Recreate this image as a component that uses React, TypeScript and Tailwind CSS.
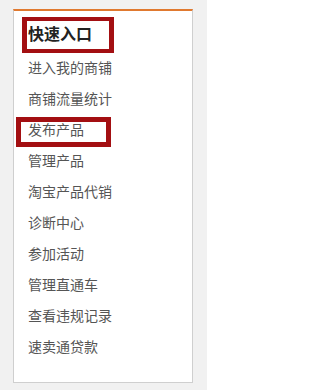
const links = [
  "进入我的商铺",
  "商铺流量统计",
  "发布产品",
  "管理产品",
  "淘宝产品代销",
  "诊断中心",
  "参加活动",
  "管理直通车",
  "查看违规记录",
  "速卖通贷款",
];

export default function App() {
  return (
    <div
      className="relative h-[390px] w-[207px] bg-[#f1f1f1] pl-[13px] pt-[9px]"
      style={{ fontFamily: '"Noto Sans CJK SC", "Noto Sans", sans-serif' }}
    >
      <div className="w-[180px] border-x border-b border-t-2 border-x-[#cfcfcf] border-b-[#cfcfcf] border-t-[#e0792f] bg-white pb-[20px] pl-[14px]">
        <h3 className="mt-[13px] text-[16px] font-bold leading-[18px] text-[#222]">快速入口</h3>
        <ul className="mt-[10px]">
          {links.map((label) => (
            <li key={label} className="h-[31px] text-[14px] leading-[31px] text-[#555]">
              {label}
            </li>
          ))}
        </ul>
      </div>

      {/* highlight marks drawn over the list */}
      <div className="absolute left-[22px] top-[17px] h-[36px] w-[92px] border-x-[5px] border-y-[4px] border-[#a30f12]" />
      <div className="absolute left-[16px] top-[117px] h-[30px] w-[95px] border-[5px] border-[#a30f12]" />
    </div>
  );
}
